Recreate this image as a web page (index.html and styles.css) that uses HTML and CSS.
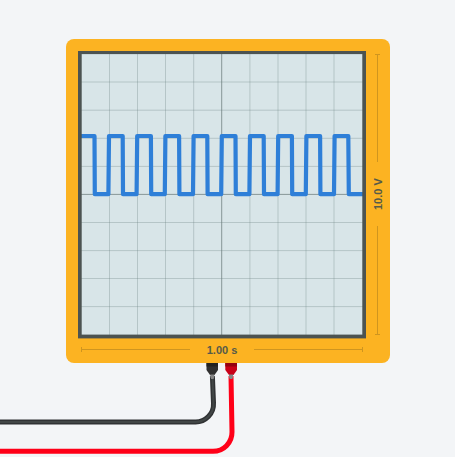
FILE: index.html
```html
<!DOCTYPE html>
<html lang="en">
<head>
<meta charset="utf-8">
<meta name="viewport" content="width=device-width, initial-scale=1">
<title>Oscilloscope</title>
<link rel="stylesheet" href="styles.css">
</head>
<body>
<main class="workplane">
  <svg class="wires" width="250" height="457" viewBox="0 0 250 457" fill="none" aria-hidden="true">
    <g stroke-linejoin="round">
      <path class="wire-black-edge" d="M0 422H195A18 18 0 0 0 213.500 403L212.400 376"/>
      <path class="wire-black-core" d="M0 422H195A18 18 0 0 0 213.500 403L212.400 376"/>
      <path class="wire-red" d="M0 451.300H213A19 19 0 0 0 232 432L231 376"/>
    </g>
    <path fill="#303030" d="M206.500 362H218V370L214.500 375H210L206.500 370Z"/>
    <path fill="#222" d="M206.500 362H218V366.500H206.500Z"/>
    <path fill="#c90018" d="M225.300 362H237V370L233.500 375H229L225.300 370Z"/>
    <path fill="#930012" d="M225.300 362H237V366.500H225.300Z"/>
    <path fill="#858585" d="M210.300 374.500H214.300V377L213.500 379H211.200L210.300 377ZM229 374.500H233V377L232.200 379H229.800L229 377Z"/>
  </svg>
  <section class="scope" aria-label="Oscilloscope">
    <svg class="screen" viewBox="0 0 288 288" fill="none" role="img" aria-label="Square wave">
      <rect x="2" y="2" width="284" height="284" fill="#d8e5e8"/>
      <path class="grid" d="M31.500 3V285M59.500 3V285M87.500 3V285M115.700 3V285M171.900 3V285M200 3V285M228 3V285M256 3V285M3 31H285M3 59.200H285M3 87.300H285M3 115.400H285M3 171.500H285M3 199.600H285M3 227.500H285M3 255.600H285"/>
      <path class="axis" d="M143.700 3V285M3 143.400H285"/>
      <path class="wave" d="M3 85H16.500L16.800 143.200H30.400L31 85H44.700L45 143.200H58.600L59.200 85H72.900L73.200 143.200H86.800L87.400 85H101.100L101.400 143.200H115L115.600 85H129.300L129.600 143.200H143.200L143.800 85H157.500L157.800 143.200H171.400L172 85H185.700L186 143.200H199.600L200.200 85H213.900L214.200 143.200H227.800L228.400 85H242.100L242.400 143.200H256L256.600 85H270.300L270.800 143.200H285"/>
      <rect class="bezel" x="1.800" y="1.200" width="284.400" height="284.300"/>
    </svg>
    <div class="ruler ruler-y"><span class="line start"></span><span class="value">10.0 V</span><span class="line end"></span></div>
    <div class="ruler ruler-x"><span class="line start"></span><span class="value">1.00 s</span><span class="line end"></span></div>
  </section>
</main>
</body>
</html>
```
FILE: styles.css
```css
body {
  margin: 0;
  background: #f3f5f7;
  font-family: "Liberation Sans", Arial, sans-serif;
}

.workplane {
  position: relative;
  box-sizing: border-box;
  min-height: 100vh;
  padding: 39px 65px 0 66px;
  overflow: hidden;
}

.wires {
  position: absolute;
  left: 0;
  top: 0;
}

.wire-black-edge { stroke: #303234; stroke-width: 5; }
.wire-black-core { stroke: #414646; stroke-width: 2; }
.wire-red { stroke: #ff0018; stroke-width: 5; }

.scope {
  position: relative;
  display: grid;
  grid-template-columns: minmax(0, 1fr) 24px;
  grid-template-rows: auto 24px;
  padding: 12px 0 0 12px;
  border-radius: 8px;
  background: #fcb322;
}

.screen {
  display: block;
  width: 100%;
}

.grid { stroke: #68808050; stroke-width: 1; }
.axis { stroke: #687878b8; stroke-width: 1; }
.wave { stroke: #2e7fd8; stroke-width: 4.2; stroke-linejoin: round; }
.bezel { stroke: #4c5351; stroke-width: 3.8; }

.ruler {
  display: flex;
  align-items: center;
  color: #565b49;
  font-size: 11px;
  font-weight: bold;
  line-height: 12px;
}

.ruler-x { padding: 0 3px 3px; }

.ruler-y {
  padding: 4px 0 3px;
  writing-mode: vertical-rl;
  transform: rotate(180deg);
}

.value {
  flex: 0 0 64px;
  text-align: center;
}

.line {
  position: relative;
  flex: 1;
  block-size: 1px;
  background: #cf951f;
}

.line::before {
  content: "";
  position: absolute;
  inset-block: -2px;
  inline-size: 1px;
  background: #cf951f;
}

.start::before { inset-inline-start: 0; }
.end::before { inset-inline-end: 0; }
```
